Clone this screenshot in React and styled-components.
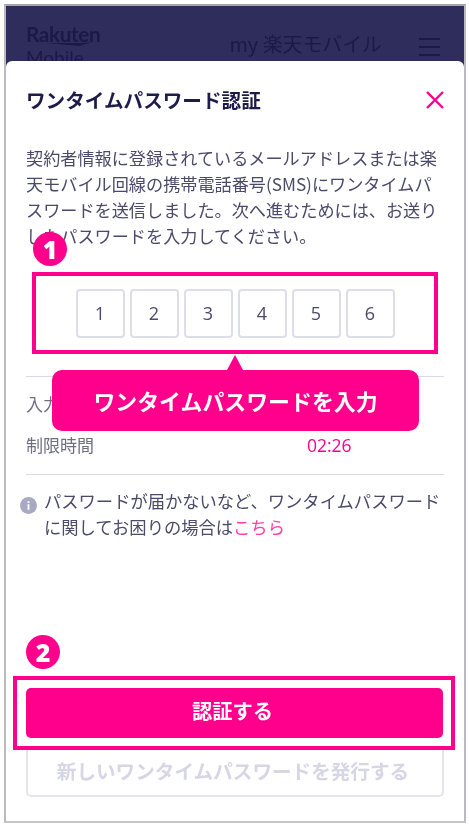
import styled, { createGlobalStyle } from "styled-components"

const PINK = "#ff008c"
const FONT = `"Noto Sans CJK JP", "Open Sans", "Noto Sans", sans-serif`

const Global = createGlobalStyle`
html, body {
  margin: 0;
  padding: 0;
  background: #fff;
}
* {
  box-sizing: border-box;
}
`

const Frame = styled.div`
width: 462px;
height: 819px;
margin: 4px 0 0 4px;
border: 2px solid #b9b9bf;
border-top-color: #a8a4b4;
border-bottom-color: #c4c4c9;
background: #2f2d5c;
display: flex;
flex-direction: column;
overflow: hidden;
font-family: ${FONT};
filter: blur(0.45px);
`

const TopBar = styled.header`
height: 55px;
flex-shrink: 0;
display: flex;
align-items: flex-start;
padding: 18px 24px 0 20px;
color: #1b1a47;
overflow: hidden;
`

const Logo = styled.div`
width: 78px;
font-family: "Lato", sans-serif;
font-size: 20.8px;
line-height: 20px;
font-weight: 700;
letter-spacing: -0.4px;
`

const LogoSwoosh = styled.svg`
display: block;
width: 74px;
height: 5px;
margin-top: -2px;
`

const LogoSub = styled.div`
font-size: 19px;
font-weight: 400;
letter-spacing: 0;
margin-top: 1px;
`

const BarTitle = styled.div`
margin-left: auto;
margin-top: 5px;
font-size: 19.9px;
line-height: 30px;
`

const Burger = styled.div`
width: 21px;
margin: 14px 0 0 37px;
display: flex;
flex-direction: column;
gap: 6px;
span {
  display: block;
  height: 2px;
  background: #1b1a47;
}
`

const Modal = styled.main`
flex: 1;
background: #fff;
border-radius: 6px 6px 0 0;
padding: 0 20px 24px;
display: flex;
flex-direction: column;
min-height: 0;
`

const ModalHead = styled.div`
display: flex;
justify-content: space-between;
align-items: center;
height: 32px;
margin-top: 22px;
`

const Title = styled.h1`
margin: 0;
font-size: 19.6px;
font-weight: 700;
color: #1d1b4a;
`

const CloseIcon = styled.svg`
width: 20px;
height: 20px;
position: relative;
left: 1px;
top: 1px;
`

const Intro = styled.p`
margin: 30px 0 0;
font-size: 17.15px;
line-height: 26px;
color: #4b4a6b;
`

const OtpHighlight = styled.div`
position: relative;
margin: 23px 6px 0;
height: 82px;
border: 4px solid ${PINK};
display: flex;
justify-content: center;
align-items: center;
gap: 5px;
z-index: 2;
`

const OtpCell = styled.div`
width: 49px;
height: 49px;
border: 2px solid #dedeeb;
border-radius: 4px;
background: #fff;
display: flex;
align-items: center;
justify-content: center;
font-family: "Open Sans", sans-serif;
font-size: 18px;
color: #4b4a6b;
`

const StepBadge = styled.div`
position: absolute;
left: ${p => p.$left}px;
top: ${p => p.$top}px;
width: 34px;
height: 34px;
border-radius: 50%;
background: ${PINK};
color: #fff;
display: flex;
align-items: center;
justify-content: center;
font-family: "Open Sans", sans-serif;
font-size: 25px;
font-weight: 800;
`

const Tooltip = styled.div`
position: absolute;
left: 16px;
top: 94px;
width: 367px;
height: 61px;
border-radius: 10px;
background: ${PINK};
color: #fff;
display: flex;
align-items: center;
justify-content: center;
font-size: 21.9px;
font-weight: 700;
&::before {
  content: "";
  position: absolute;
  top: -15px;
  left: 175px;
  border-left: 8px solid transparent;
  border-right: 8px solid transparent;
  border-bottom: 15px solid ${PINK};
}
`

const InfoTable = styled.div`
margin-top: 22px;
border-top: 1px solid #d9d9e6;
border-bottom: 1px solid #d9d9e6;
height: 99px;
padding-top: 13px;
`

const InfoRow = styled.div`
display: grid;
grid-template-columns: 281px 1fr;
height: 27px;
margin-bottom: 14px;
align-items: center;
font-size: 17px;
color: #6f6f82;
`

const InfoValue = styled.span`
font-family: "Open Sans", sans-serif;
font-size: 17.5px;
color: ${PINK};
`

const Help = styled.div`
display: flex;
gap: 7px;
margin: 13px 0 0 -6px;
`

const HelpIcon = styled.svg`
width: 17px;
height: 17px;
flex-shrink: 0;
margin-top: 9px;
`

const HelpText = styled.p`
margin: 0;
font-size: 17.3px;
line-height: 26px;
color: #4b4a6b;
a {
  color: #ff3ea8;
  text-decoration: none;
}
`

const Actions = styled.div`
margin-top: auto;
`

const ButtonHighlight = styled.div`
position: relative;
margin: 0 -11px 0 -13px;
height: 74px;
border: 4px solid ${PINK};
padding: 8px 8px 8px 9px;
background: #fff;
z-index: 1;
`

const PrimaryButton = styled.button`
display: block;
width: 100%;
height: 50px;
padding: 0 4px 7px 0;
border: 0;
border-radius: 5px;
background: ${PINK};
color: #fff;
font-family: ${FONT};
font-size: 20.3px;
font-weight: 700;
`

const SecondaryButton = styled.button`
display: block;
width: 100%;
height: 52px;
margin-top: -5px;
padding: 0 4px 2px 0;
border: 2px solid #e4e4ee;
border-radius: 5px;
background: #fff;
color: #d6d6e4;
font-family: ${FONT};
font-size: 19.6px;
font-weight: 700;
`

const DIGITS = ["1", "2", "3", "4", "5", "6"]

const App = () => {
  return (
    <Frame>
      <Global />
      <TopBar>
        <Logo>
          Rakuten
          <LogoSwoosh viewBox="0 0 74 5">
            <path d="M20 1 L56 1 L66 0 L54 4 Z" fill="#1b1a47" />
          </LogoSwoosh>
          <LogoSub>Mobile</LogoSub>
        </Logo>
        <BarTitle>my 楽天モバイル</BarTitle>
        <Burger>
          <span />
          <span />
          <span />
        </Burger>
      </TopBar>

      <Modal>
        <ModalHead>
          <Title>ワンタイムパスワード認証</Title>
          <CloseIcon viewBox="0 0 20 20">
            <path d="M2 2 L18 18 M18 2 L2 18" stroke={PINK} strokeWidth="2.4" fill="none" />
          </CloseIcon>
        </ModalHead>

        <Intro>
          契約者情報に登録されているメールアドレスまたは楽天モバイル回線の携帯電話番号(SMS)にワンタイムパスワードを送信しました。次へ進むためには、お送りしたパスワードを入力してください。
        </Intro>

        <OtpHighlight>
          <StepBadge $left={-3} $top={-44}>1</StepBadge>
          {DIGITS.map(d => (
            <OtpCell key={d}>{d}</OtpCell>
          ))}
          <Tooltip>ワンタイムパスワードを入力</Tooltip>
        </OtpHighlight>

        <InfoTable>
          <InfoRow>
            <span>入力回数</span>
          </InfoRow>
          <InfoRow>
            <span>制限時間</span>
            <InfoValue>02:26</InfoValue>
          </InfoRow>
        </InfoTable>

        <Help>
          <HelpIcon viewBox="0 0 17 17">
            <circle cx="8.5" cy="8.5" r="8.5" fill="#a9a9c4" />
            <rect x="7.6" y="7.2" width="1.8" height="5.6" fill="#fff" />
            <rect x="7.6" y="4.2" width="1.8" height="1.8" fill="#fff" />
          </HelpIcon>
          <HelpText>
            パスワードが届かないなど、ワンタイムパスワードに関してお困りの場合は<a href="#help">こちら</a>
          </HelpText>
        </Help>

        <Actions>
          <ButtonHighlight>
            <StepBadge $left={9} $top={-45}>2</StepBadge>
            <PrimaryButton>認証する</PrimaryButton>
          </ButtonHighlight>
          <SecondaryButton>新しいワンタイムパスワードを発行する</SecondaryButton>
        </Actions>
      </Modal>
    </Frame>
  )
}

export default App
